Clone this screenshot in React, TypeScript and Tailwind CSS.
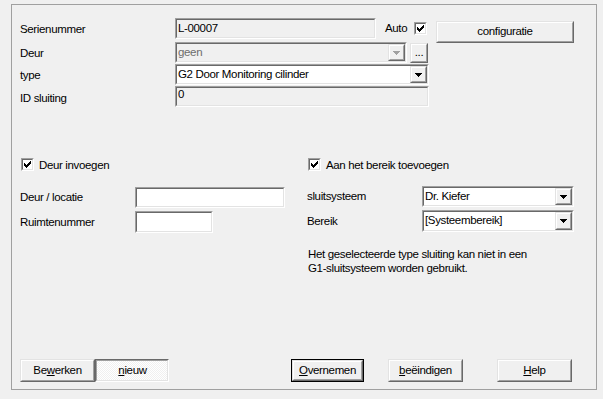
import React from "react";

function Sunken({
  className = "",
  inner = "",
  children,
}: {
  className?: string;
  inner?: string;
  children?: React.ReactNode;
}) {
  return (
    <div
      className={`border border-t-[#a0a0a0] border-l-[#a0a0a0] border-r-white border-b-white ${className}`}
    >
      <div
        className={`h-full w-full border border-t-[#696969] border-l-[#696969] border-r-[#e3e3e3] border-b-[#e3e3e3] ${inner}`}
      >
        {children}
      </div>
    </div>
  );
}

function Raised({
  className = "",
  inner = "",
  children,
}: {
  className?: string;
  inner?: string;
  children?: React.ReactNode;
}) {
  return (
    <div
      className={`border border-t-[#e3e3e3] border-l-[#e3e3e3] border-r-[#696969] border-b-[#696969] bg-[#f0f0f0] ${className}`}
    >
      <div
        className={`h-full w-full border border-t-white border-l-white border-r-[#a0a0a0] border-b-[#a0a0a0] ${inner}`}
      >
        {children}
      </div>
    </div>
  );
}

function Arrow({ disabled = false }: { disabled?: boolean }) {
  return (
    <Raised className="w-[17px] h-full shrink-0" inner="flex items-center justify-center">
      <svg width="7" height="4" viewBox="0 0 7 4" shapeRendering="crispEdges">
        <polygon points="0,0 7,0 3.5,4" fill={disabled ? "#a0a0a0" : "#000"} />
      </svg>
    </Raised>
  );
}

function Combo({
  w,
  h,
  text,
  disabled = false,
}: {
  w: string;
  h: string;
  text: string;
  disabled?: boolean;
}) {
  return (
    <Sunken
      className={`${w} ${h} shrink-0`}
      inner={`flex ${disabled ? "bg-[#f0f0f0]" : "bg-white"}`}
    >
      <div
        className={`flex-1 pl-[1px] leading-[17px] whitespace-nowrap overflow-hidden ${
          disabled ? "text-[#6d6d6d]" : "text-black"
        }`}
      >
        {text}
      </div>
      <Arrow disabled={disabled} />
    </Sunken>
  );
}

const CHECK: [number, number][] = [
  [6, 0],
  [5, 1], [6, 1],
  [0, 2], [4, 2], [5, 2], [6, 2],
  [0, 3], [1, 3], [3, 3], [4, 3], [5, 3],
  [0, 4], [1, 4], [2, 4], [3, 4], [4, 4],
  [1, 5], [2, 5], [3, 5],
  [2, 6],
];

function Check({ className = "" }: { className?: string }) {
  return (
    <Sunken className={`w-[13px] h-[13px] shrink-0 ${className}`} inner="bg-white">
      <svg width="9" height="9" viewBox="0 0 9 9" shapeRendering="crispEdges" className="block">
        {CHECK.map(([x, y], i) => (
          <rect key={i} x={x + 1} y={y + 1} width="1" height="1" fill="#000" />
        ))}
      </svg>
    </Sunken>
  );
}

function Btn({
  w,
  children,
  def = false,
  h = "h-[23px]",
}: {
  w: string;
  children: React.ReactNode;
  def?: boolean;
  h?: string;
}) {
  const body = (
    <Raised
      className={def ? "h-full w-full" : `${w} ${h} shrink-0`}
      inner="flex items-center justify-center whitespace-nowrap"
    >
      {children}
    </Raised>
  );
  if (def) {
    return <div className={`${w} ${h} shrink-0 border border-black`}>{body}</div>;
  }
  return body;
}

export default function App() {
  return (
    <div className="w-[603px] h-[399px] bg-[#f0f0f0] pt-[4px] pl-[11px] overflow-hidden font-['Liberation_Sans',Arial,sans-serif] text-[11.5px] tracking-[-0.35px] text-black">
      <div className="w-[586px] h-[386px] border border-[#a0a0a0] flex flex-col pl-[8px]">
        {/* top section */}
        <div className="mt-[13px] flex flex-col">
          <div className="flex items-start h-[21px]">
            <div className="w-[155px] leading-[22px]">Serienummer</div>
            <Sunken className="w-[201px] h-[21px] shrink-0" inner="bg-[#f0f0f0]">
              <div className="pl-[1px] leading-[17px]">L-00007</div>
            </Sunken>
            <div className="w-[29px] ml-[9px] leading-[21px]">Auto</div>
            <Check className="mt-[4px]" />
            <div className="ml-[9px] mt-[3px]">
              <Btn w="w-[138px]" h="h-[22px]">
                configuratie
              </Btn>
            </div>
          </div>
          <div className="flex items-start h-[21px] mt-[3px]">
            <div className="w-[155px] leading-[22px]">Deur</div>
            <Combo w="w-[232px]" h="h-[21px]" text="geen" disabled />
            <div className="ml-[3px] mt-[1px]">
              <Btn w="w-[18px]" h="h-[20px]">
                <span className="leading-none">...</span>
              </Btn>
            </div>
          </div>
          <div className="flex items-start h-[21px] mt-[1px]">
            <div className="w-[155px] leading-[22px]">type</div>
            <Combo w="w-[254px]" h="h-[21px]" text="G2 Door Monitoring cilinder" />
          </div>
          <div className="flex items-start h-[21px] mt-[1px]">
            <div className="w-[155px] leading-[24px]">ID sluiting</div>
            <Sunken className="w-[254px] h-[21px] shrink-0" inner="bg-[#f0f0f0]">
              <div className="pl-[1px] leading-[13px]">0</div>
            </Sunken>
          </div>
        </div>

        {/* middle section */}
        <div className="flex mt-[51px]">
          <div className="w-[287px] flex flex-col">
            <div className="flex items-center h-[13px]">
              <Check className="ml-[1px]" />
              <div className="ml-[5px] leading-[13px] pt-[1px]">Deur invoegen</div>
            </div>
            <div className="flex items-center mt-[16px]">
              <div className="w-[115px] pt-[1px]">Deur / locatie</div>
              <Sunken className="w-[150px] h-[21px] shrink-0" inner="bg-white" />
            </div>
            <div className="flex items-center mt-[3px]">
              <div className="w-[115px] pt-[1px]">Ruimtenummer</div>
              <Sunken className="w-[78px] h-[22px] shrink-0" inner="bg-white" />
            </div>
          </div>
          <div className="flex flex-col">
            <div className="flex items-center h-[13px]">
              <Check className="ml-[1px]" />
              <div className="ml-[5px] leading-[13px] pt-[1px]">Aan het bereik toevoegen</div>
            </div>
            <div className="flex items-center mt-[15px]">
              <div className="w-[115px] pt-[1px]">sluitsysteem</div>
              <Combo w="w-[152px]" h="h-[21px]" text="Dr. Kiefer" />
            </div>
            <div className="flex items-center mt-[3px]">
              <div className="w-[115px] pt-[1px]">Bereik</div>
              <Combo w="w-[152px]" h="h-[22px]" text="[Systeembereik]" />
            </div>
            <div className="mt-[15px] leading-[14px] pl-[1px]">
              Het geselecteerde type sluiting kan niet in een
              <br />
              G1-sluitsysteem worden gebruikt.
            </div>
          </div>
        </div>

        {/* bottom buttons */}
        <div className="mt-auto mb-[7px] flex items-end">
          <Btn w="w-[75px]">
            <span>
              Be<span className="underline">w</span>erken
            </span>
          </Btn>
          <div className="w-[74px] h-[23px] shrink-0 border border-t-[#696969] border-l-[#696969] border-r-white border-b-white">
            <div className="h-full w-full border border-t-[#a0a0a0] border-l-[#a0a0a0] border-r-[#e3e3e3] border-b-[#e3e3e3] bg-[repeating-conic-gradient(#ffffff_0%_25%,#f0f0f0_0%_50%)] bg-[length:2px_2px] flex items-center justify-center pt-[1px] pl-[1px]">
              <span>
                <span className="underline">n</span>ieuw
              </span>
            </div>
          </div>
          <div className="ml-[122px]">
            <Btn w="w-[73px]" def>
              <span>
                <span className="underline">O</span>vernemen
              </span>
            </Btn>
          </div>
          <div className="ml-[24px]">
            <Btn w="w-[75px]">
              <span>
                <span className="underline">b</span>eëindigen
              </span>
            </Btn>
          </div>
          <div className="ml-[34px]">
            <Btn w="w-[75px]">
              <span>
                <span className="underline">H</span>elp
              </span>
            </Btn>
          </div>
        </div>
      </div>
    </div>
  );
}
